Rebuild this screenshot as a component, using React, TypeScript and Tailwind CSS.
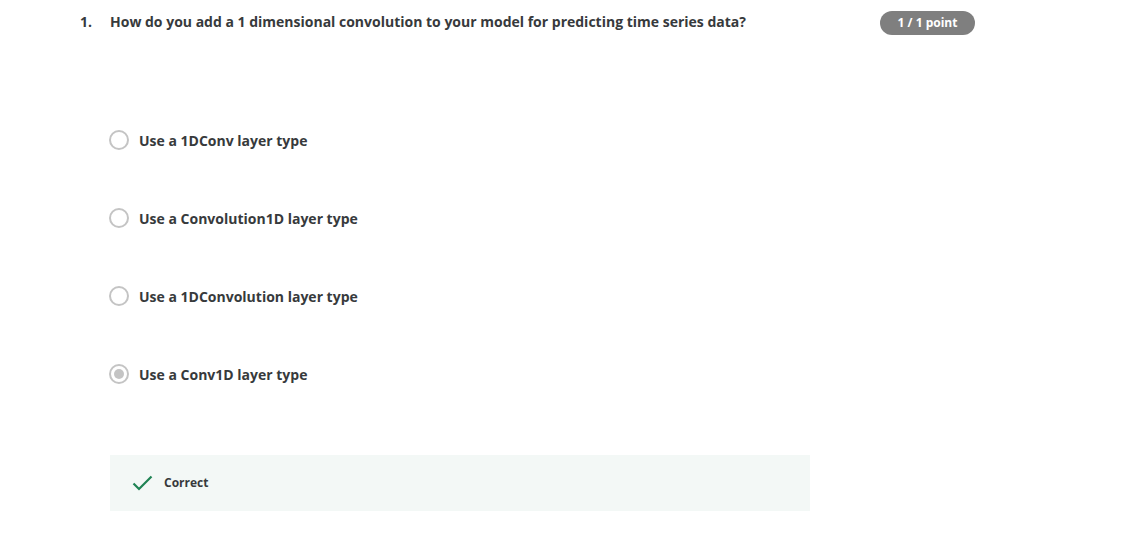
import React from 'react';

const options = [
  'Use a 1DConv layer type',
  'Use a Convolution1D layer type',
  'Use a 1DConvolution layer type',
  'Use a Conv1D layer type',
];

const Radio = ({ checked }: { checked: boolean }) => (
  <span className="w-5 h-5 rounded-full border-2 border-[#c4c4c4] flex items-center justify-center shrink-0 bg-white">
    {checked && <span className="w-[10px] h-[10px] rounded-full bg-[#c4c4c4]" />}
  </span>
);

export default function App() {
  return (
    <div className="w-[1126px] h-[537px] bg-white text-[#373a3c] font-['Open_Sans',sans-serif] relative">
      <div className="flex items-start pl-[80px] pt-[12px]">
        <span className="w-[30px] text-[14px] font-bold leading-[20px]">1.</span>
        <span className="text-[14px] font-bold leading-[20px] w-[770px]">
          How do you add a 1 dimensional convolution to your model for predicting time series data?
        </span>
        <span className="h-6 w-[95px] rounded-full bg-[#7f7f7f] text-white text-[12px] font-bold flex items-center justify-center -mt-[1px]">
          1 / 1 point
        </span>
      </div>

      <div className="flex flex-col pl-[109px] pt-[95px] gap-[58px]">
        {options.map((o, i) => (
          <label key={o} className="flex items-center gap-[10px] h-5">
            <Radio checked={i === 3} />
            <span className="text-[14px] font-bold">{o}</span>
          </label>
        ))}
      </div>

      <div className="ml-[110px] mt-[71px] w-[700px] h-[56px] bg-[#f3f8f6] flex items-center pl-[22px] gap-[11px]">
        <svg width="21" height="16" viewBox="0 0 21 16" fill="none">
          <path d="M1.5 8.5 L7 14 L19.5 1.5" stroke="#1f8354" strokeWidth="2.2" />
        </svg>
        <span className="text-[12px] font-bold">Correct</span>
      </div>
    </div>
  );
}
